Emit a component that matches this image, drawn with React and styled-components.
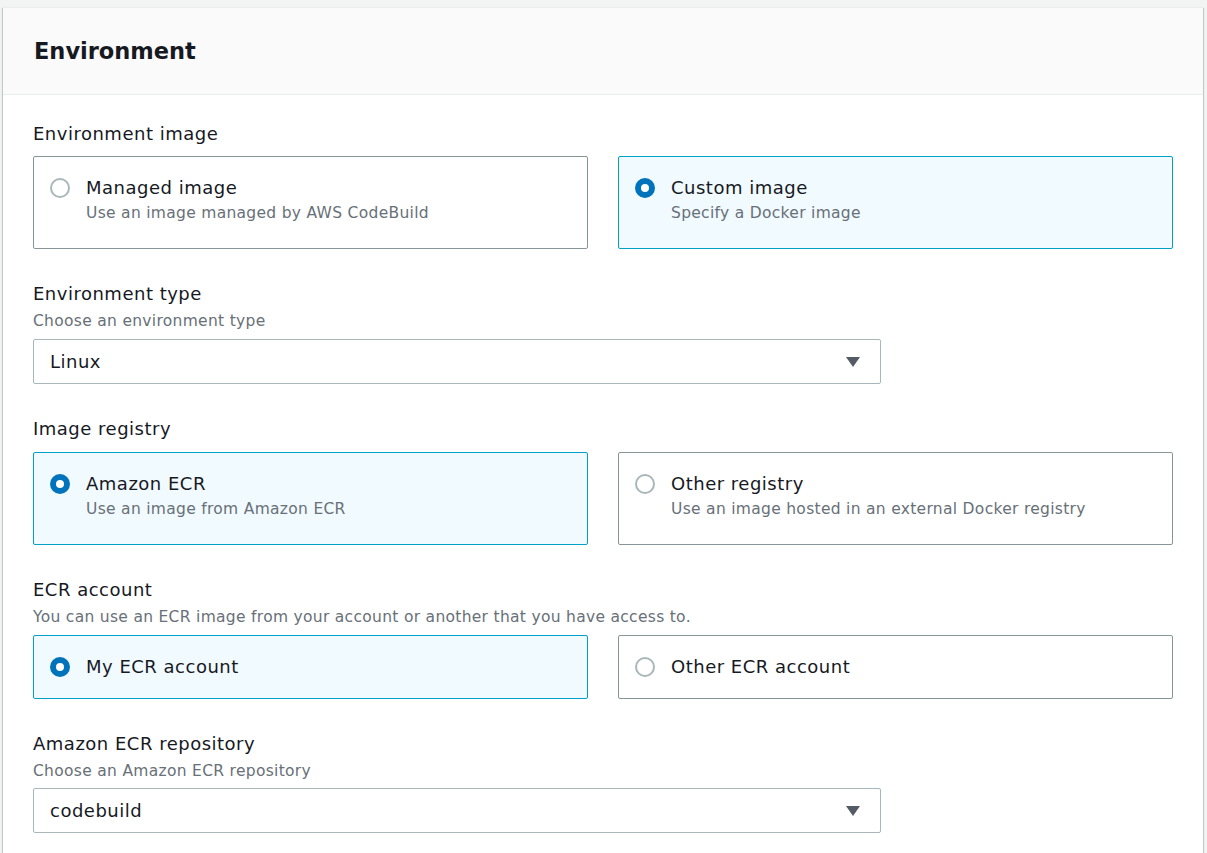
import React from 'react';
import styled, { createGlobalStyle } from 'styled-components';

const GlobalStyle = createGlobalStyle`
  html, body {
    margin: 0;
    background: #f2f3f3;
  }
  body {
    padding: 7px 4px 0 3px;
    font-family: 'DejaVu Sans', 'Noto Sans', sans-serif;
    color: #16191f;
  }
`;

const Card = styled.section`
  width: 1200px;
  background: #ffffff;
  box-shadow: 0 1px 1px 0 rgba(0, 28, 36, 0.3), 1px 1px 1px 0 rgba(0, 28, 36, 0.15),
    -1px 1px 1px 0 rgba(0, 28, 36, 0.15);
  border-top: 1px solid #eaeded;
`;

const Header = styled.header`
  height: 87px;
  box-sizing: border-box;
  display: flex;
  align-items: center;
  padding: 0 30px 0 31px;
  background: #fafafa;
  border-bottom: 1px solid #eaeded;
`;

const Title = styled.h2`
  margin: 0;
  font-size: 22.5px;
  font-weight: 700;
  line-height: 30px;
  color: #16191f;
`;

const Body = styled.div`
  display: flex;
  flex-direction: column;
  gap: 33px;
  padding: 27px 30px 30px 30px;
`;

const Field = styled.div`
  display: flex;
  flex-direction: column;
  padding-top: 1px;
`;

const Label = styled.div`
  font-size: 18px;
  letter-spacing: 0.5px;
  line-height: 22px;
  color: #16191f;
`;

const Description = styled.div`
  font-size: 15.5px;
  letter-spacing: 0.3px;
  line-height: 20px;
  margin-top: 6px;
  color: #687078;
`;

const Control = styled.div`
  margin-top: ${({ $gap }) => $gap}px;
`;

const TileGrid = styled.div`
  display: grid;
  grid-template-columns: 555px 555px;
  gap: 30px;
`;

const Tile = styled.label`
  display: flex;
  align-items: flex-start;
  gap: 16px;
  box-sizing: border-box;
  padding: ${({ $single }) => ($single ? '20px 16px 20px' : '20px 16px 25px')};
  border: 1px solid ${({ $checked }) => ($checked ? '#00a1c9' : '#879596')};
  border-radius: 2px;
  background: ${({ $checked }) => ($checked ? '#f1faff' : '#ffffff')};
  cursor: pointer;
`;

const Radio = styled.span`
  flex: none;
  width: 20px;
  height: 20px;
  margin-top: 1px;
  box-sizing: border-box;
  border-radius: 50%;
  background: #ffffff;
  border: ${({ $checked }) => ($checked ? '6px solid #0073bb' : '2px solid #aab7b8')};
`;

const TileText = styled.span`
  display: flex;
  flex-direction: column;
`;

const TileTitle = styled.span`
  font-size: 18px;
  letter-spacing: 0.5px;
  line-height: 22px;
  color: #16191f;
`;

const TileDesc = styled.span`
  font-size: 15.5px;
  letter-spacing: 0.3px;
  line-height: 20px;
  margin-top: 4px;
  color: #687078;
`;

const Select = styled.div`
  width: 848px;
  height: 45px;
  box-sizing: border-box;
  display: flex;
  align-items: center;
  justify-content: space-between;
  padding: 0 19px 0 16px;
  border: 1px solid #aab7b8;
  border-radius: 2px;
  background: #ffffff;
  font-size: 18px;
  letter-spacing: 0.5px;
  color: #16191f;
`;

const Caret = () => (
  <svg width="16" height="12" viewBox="0 0 16 12" aria-hidden="true">
    <path d="M1 1h14L8 11z" fill="#545b64" />
  </svg>
);

const RadioTile = ({ checked, title, desc }) => (
  <Tile $checked={checked} $single={!desc}>
    <Radio $checked={checked} />
    <TileText>
      <TileTitle>{title}</TileTitle>
      {desc && <TileDesc>{desc}</TileDesc>}
    </TileText>
  </Tile>
);

export default function App() {
  return (
    <>
      <GlobalStyle />
      <Card>
        <Header>
          <Title>Environment</Title>
        </Header>
        <Body>
          <Field>
            <Label>Environment image</Label>
            <Control $gap={11}>
              <TileGrid>
                <RadioTile title="Managed image" desc="Use an image managed by AWS CodeBuild" />
                <RadioTile checked title="Custom image" desc="Specify a Docker image" />
              </TileGrid>
            </Control>
          </Field>

          <Field>
            <Label>Environment type</Label>
            <Description>Choose an environment type</Description>
            <Control $gap={8}>
              <Select>
                <span>Linux</span>
                <Caret />
              </Select>
            </Control>
          </Field>

          <Field>
            <Label>Image registry</Label>
            <Control $gap={12}>
              <TileGrid>
                <RadioTile checked title="Amazon ECR" desc="Use an image from Amazon ECR" />
                <RadioTile
                  title="Other registry"
                  desc="Use an image hosted in an external Docker registry"
                />
              </TileGrid>
            </Control>
          </Field>

          <Field>
            <Label>ECR account</Label>
            <Description>
              You can use an ECR image from your account or another that you have access to.
            </Description>
            <Control $gap={8}>
              <TileGrid>
                <RadioTile checked title="My ECR account" />
                <RadioTile title="Other ECR account" />
              </TileGrid>
            </Control>
          </Field>

          <Field>
            <Label>Amazon ECR repository</Label>
            <Description>Choose an Amazon ECR repository</Description>
            <Control $gap={7}>
              <Select>
                <span>codebuild</span>
                <Caret />
              </Select>
            </Control>
          </Field>
        </Body>
      </Card>
    </>
  );
}
